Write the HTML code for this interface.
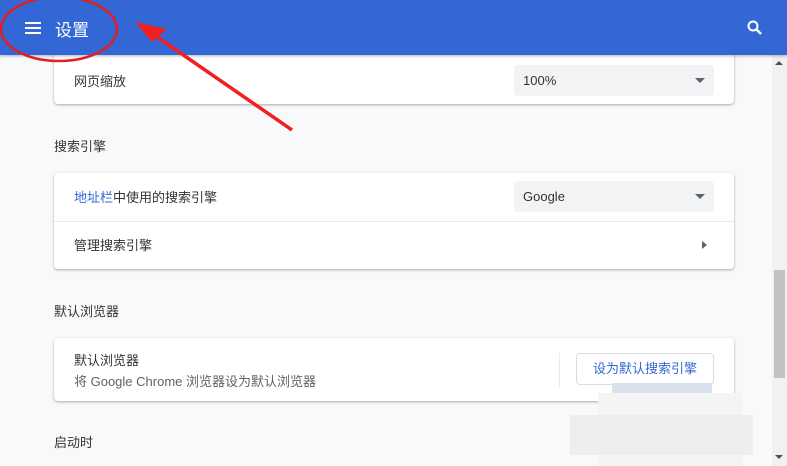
<!DOCTYPE html><html><head><meta charset="utf-8"><style>
body{margin:0;width:787px;height:466px;overflow:hidden;background:#f8f9fa;font-family:"Liberation Sans","Noto Sans CJK SC",sans-serif;font-size:13px;color:#333;position:relative}
.hdr{position:absolute;left:0;top:0;width:787px;height:55px;background:#3367d6;box-shadow:0 1px 3px rgba(0,0,0,.3);z-index:2}
.card{position:absolute;left:54px;width:680px;background:#fff;border-radius:4px;box-shadow:0 1px 2px rgba(60,64,67,.3),0 1px 3px rgba(60,64,67,.15)}
.t{position:absolute;white-space:nowrap}
.sel{position:absolute;left:460px;width:200px;height:31px;background:#f1f3f4;border-radius:4px}
.sel span{position:absolute;left:9px;top:8px}
.sel i{position:absolute;right:9px;top:13px;border:5px solid transparent;border-top:5px solid #5f6368;border-bottom:0}
.sb{position:absolute;left:772px;top:55px;width:15px;height:411px;background:#f1f1f1}
</style></head><body>
<div class="hdr">
<div style="position:absolute;left:25px;top:22px;width:16px;height:2px;background:#fff;box-shadow:0 5px 0 #fff,0 10px 0 #fff"></div>
<div class="t" style="left:55px;top:16px;color:#fff;font-size:17px">设置</div>
<svg style="position:absolute;left:746px;top:19px" width="18" height="18" viewBox="0 0 18 18"><circle cx="7" cy="7" r="4.5" stroke="#fff" stroke-width="2" fill="none"/><path d="M10.5 10.5L15 15" stroke="#fff" stroke-width="2.4"/></svg>
</div>
<div class="card" style="top:40px;height:64px">
<div class="t" style="left:20px;top:31px">网页缩放</div>
<div class="sel" style="top:25px"><span>100%</span><i></i></div>
</div>
<div class="t" style="left:54px;top:136px">搜索引擎</div>
<div class="card" style="top:173px;height:96px">
<div class="t" style="left:20px;top:14px"><span style="color:#3367d6">地址栏</span>中使用的搜索引擎</div>
<div class="sel" style="top:8px"><span>Google</span><i></i></div>
<div style="position:absolute;left:0;top:48px;width:680px;height:1px;background:#e8eaed"></div>
<div class="t" style="left:20px;top:62px">管理搜索引擎</div>
<div style="position:absolute;left:648px;top:68px;border:4px solid transparent;border-left:5px solid #5f6368;border-right:0"></div>
</div>
<div class="t" style="left:54px;top:301px">默认浏览器</div>
<div class="card" style="top:338px;height:63px">
<div class="t" style="left:20px;top:12px">默认浏览器</div>
<div class="t" style="left:20px;top:33px;color:#5f6368">将 Google Chrome 浏览器设为默认浏览器</div>
<div style="position:absolute;left:505px;top:15px;width:1px;height:34px;background:#e8eaed"></div>
<div style="position:absolute;left:522px;top:15px;width:136px;height:30px;border:1px solid #dadce0;border-radius:4px;color:#3367d6;text-align:center;line-height:30px">设为默认搜索引擎</div>
</div>
<div style="position:absolute;left:612px;top:383px;width:100px;height:10px;background:#d8e1ec"></div>
<div style="position:absolute;left:598px;top:393px;width:145px;height:73px;background:#f4f4f5"></div>
<div style="position:absolute;left:570px;top:415px;width:183px;height:40px;background:#eeeeef"></div>
<div class="t" style="left:54px;top:432px">启动时</div>
<div class="sb"><div style="position:absolute;left:2px;top:215px;width:11px;height:108px;background:#c1c1c1"></div>
<div style="position:absolute;left:3px;top:6px;border:4px solid transparent;border-bottom:4px solid #505050;border-top:0"></div>
<div style="position:absolute;left:3px;top:400px;border:4px solid transparent;border-top:4px solid #505050;border-bottom:0"></div></div>
<svg style="position:absolute;left:0;top:0;z-index:3" width="787" height="466"><ellipse cx="59" cy="29" rx="58" ry="32" fill="none" stroke="#e02020" stroke-width="2.5"/>
<path d="M292 130L150 32" stroke="#f02020" stroke-width="3.5"/><path d="M135 22L167 29L152 42Z" fill="#f02020"/></svg>
</body></html>
